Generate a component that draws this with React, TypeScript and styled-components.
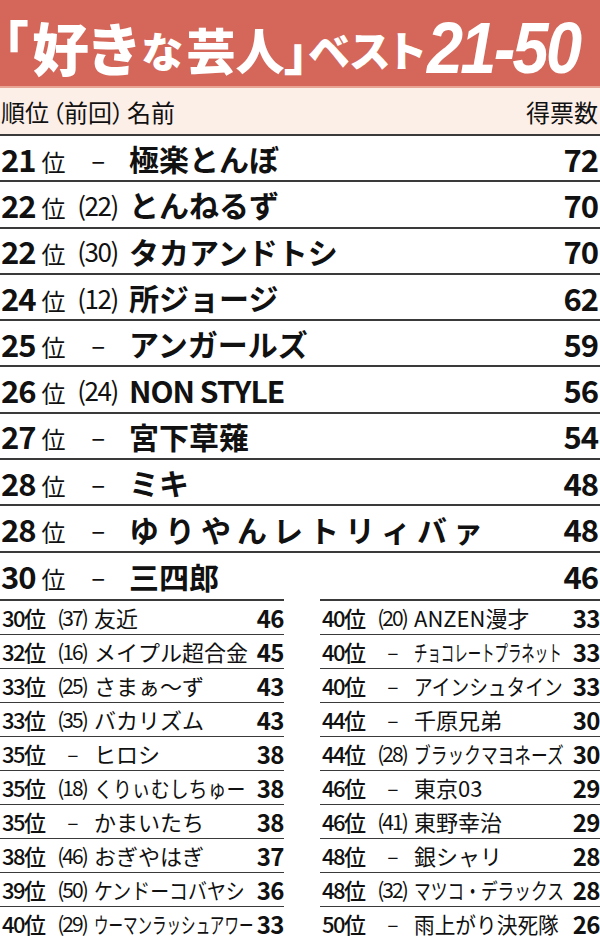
import styled, { createGlobalStyle } from "styled-components";

const GlobalStyle = createGlobalStyle`
  html, body {
    margin: 0;
    padding: 0;
    background: #ffffff;
  }
  body {
    font-family: "Noto Sans CJK JP", "Noto Sans", sans-serif;
    color: #111111;
  }
`;

const Page = styled.div`
  width: 600px;
  height: 940px;
  overflow: hidden;
  background: #ffffff;
`;

const TitleBar = styled.div`
  height: 86px;
  background: #d4675a;
  border-bottom: 2px solid #e8a596;
  display: flex;
  align-items: center;
  padding-left: 3px;
  color: #ffffff;
  font-weight: 900;
  white-space: nowrap;
  line-height: 1;
  font-feature-settings: "palt";
  overflow: hidden;
`;

const TitlePart = styled.span<{ $size: number; $shift?: number; $gap?: number }>`
  font-size: ${(p) => p.$size}px;
  position: relative;
  top: ${(p) => p.$shift ?? 0}px;
  margin-right: ${(p) => p.$gap ?? 0}px;
`;

const TitleNum = styled.span`
  display: inline-block;
  font-family: "Liberation Sans", sans-serif;
  font-style: italic;
  font-weight: 700;
  font-size: 72px;
  transform: scaleX(0.9);
  transform-origin: left center;
  letter-spacing: -3px;
  position: relative;
  top: 5px;
  margin-left: 2px;
`;

const HeaderRow = styled.div`
  height: 46px;
  background: #fcefe8;
  border-bottom: 2px solid #3a3a3a;
  display: flex;
  align-items: center;
  justify-content: space-between;
  font-size: 24px;
  padding: 0 2px 0 1px;
  font-feature-settings: "palt";
`;

const HeaderParen = styled.span`
  margin: 0 3px;
`;

const BigRow = styled.div<{ $last?: boolean }>`
  height: 46.3px;
  box-sizing: border-box;
  border-bottom: ${(p) => (p.$last ? "none" : "2px solid #3a3a3a")};
  display: flex;
  align-items: center;
  padding: 0 2px 0 1px;
  white-space: nowrap;
`;

const BigRank = styled.span`
  width: 70px;
  flex: none;
  display: flex;
  align-items: baseline;
`;

const BigRankNum = styled.span`
  font-size: 31px;
  font-weight: 700;
  letter-spacing: -1px;
`;

const BigRankUnit = styled.span`
  font-size: 24px;
  margin-left: 6px;
`;

const BigPrev = styled.span`
  width: 57px;
  flex: none;
  text-align: center;
  font-size: 26px;
  letter-spacing: -1.5px;
  margin-left: -2px;
`;

const BigName = styled.span<{ $spacing?: number }>`
  flex: 1;
  font-size: 30px;
  font-weight: 700;
  letter-spacing: ${(p) => p.$spacing ?? 0}px;
  margin-left: 3px;
`;

const BigVotes = styled.span`
  font-size: 31px;
  font-weight: 700;
  letter-spacing: -1px;
`;

const SmallGrid = styled.div`
  display: grid;
  grid-template-columns: 284px minmax(0, 1fr);
  column-gap: 36px;
`;

const SmallColumn = styled.div`
  border-top: 2px solid #3a3a3a;
  min-width: 0;
`;

const SmallRow = styled.div`
  height: 34px;
  box-sizing: border-box;
  border-bottom: 1.5px solid #3a3a3a;
  display: flex;
  align-items: center;
  white-space: nowrap;
  padding-left: 2px;
`;

const SmallRank = styled.span`
  width: 50px;
  flex: none;
  font-size: 22px;
  font-weight: 500;
  letter-spacing: -1.5px;
`;

const SmallPrev = styled.span`
  width: 40px;
  flex: none;
  text-align: center;
  font-size: 21px;
  letter-spacing: -2px;
`;

const SmallNameBox = styled.span`
  flex: 1;
  min-width: 0;
  margin-left: 2px;
`;

const SmallName = styled.span<{ $squeeze?: number }>`
  display: inline-block;
  font-size: 22px;
  transform: scaleX(${(p) => p.$squeeze ?? 1});
  transform-origin: left center;
`;

const SmallVotes = styled.span`
  flex: none;
  font-size: 24px;
  font-weight: 700;
  letter-spacing: -0.5px;
`;

type Entry = {
  rank: number;
  prev: string;
  name: string;
  votes: number;
  squeeze?: number;
  spacing?: number;
};

const bigEntries: Entry[] = [
  { rank: 21, prev: "–", name: "極楽とんぼ", votes: 72 },
  { rank: 22, prev: "(22)", name: "とんねるず", votes: 70 },
  { rank: 22, prev: "(30)", name: "タカアンドトシ", votes: 70 },
  { rank: 24, prev: "(12)", name: "所ジョージ", votes: 62 },
  { rank: 25, prev: "–", name: "アンガールズ", votes: 59 },
  { rank: 26, prev: "(24)", name: "NON STYLE", votes: 56, spacing: -1 },
  { rank: 27, prev: "–", name: "宮下草薙", votes: 54 },
  { rank: 28, prev: "–", name: "ミキ", votes: 48 },
  { rank: 28, prev: "–", name: "ゆりやんレトリィバァ", votes: 48, spacing: 6 },
  { rank: 30, prev: "–", name: "三四郎", votes: 46 },
];

const leftEntries: Entry[] = [
  { rank: 30, prev: "(37)", name: "友近", votes: 46 },
  { rank: 32, prev: "(16)", name: "メイプル超合金", votes: 45 },
  { rank: 33, prev: "(25)", name: "さまぁ～ず", votes: 43 },
  { rank: 33, prev: "(35)", name: "バカリズム", votes: 43 },
  { rank: 35, prev: "–", name: "ヒロシ", votes: 38 },
  { rank: 35, prev: "(18)", name: "くりぃむしちゅー", votes: 38, squeeze: 0.86 },
  { rank: 35, prev: "–", name: "かまいたち", votes: 38 },
  { rank: 38, prev: "(46)", name: "おぎやはぎ", votes: 37 },
  { rank: 39, prev: "(50)", name: "ケンドーコバヤシ", votes: 36, squeeze: 0.86 },
  { rank: 40, prev: "(29)", name: "ウーマンラッシュアワー", votes: 33, squeeze: 0.66 },
];

const rightEntries: Entry[] = [
  { rank: 40, prev: "(20)", name: "ANZEN漫才", votes: 33 },
  { rank: 40, prev: "–", name: "チョコレートプラネット", votes: 33, squeeze: 0.61 },
  { rank: 40, prev: "–", name: "アインシュタイン", votes: 33, squeeze: 0.85 },
  { rank: 44, prev: "–", name: "千原兄弟", votes: 30 },
  { rank: 44, prev: "(28)", name: "ブラックマヨネーズ", votes: 30, squeeze: 0.76 },
  { rank: 46, prev: "–", name: "東京03", votes: 29 },
  { rank: 46, prev: "(41)", name: "東野幸治", votes: 29 },
  { rank: 48, prev: "–", name: "銀シャリ", votes: 28 },
  { rank: 48, prev: "(32)", name: "マツコ・デラックス", votes: 28, squeeze: 0.76 },
  { rank: 50, prev: "–", name: "雨上がり決死隊", votes: 26, squeeze: 0.94 },
];

function SmallList({ entries }: { entries: Entry[] }) {
  return (
    <SmallColumn>
      {entries.map((e, i) => (
        <SmallRow key={i}>
          <SmallRank>{e.rank}位</SmallRank>
          <SmallPrev>{e.prev}</SmallPrev>
          <SmallNameBox>
            <SmallName $squeeze={e.squeeze}>{e.name}</SmallName>
          </SmallNameBox>
          <SmallVotes>{e.votes}</SmallVotes>
        </SmallRow>
      ))}
    </SmallColumn>
  );
}

export default function App() {
  return (
    <Page>
      <GlobalStyle />
      <TitleBar>
        <TitlePart $size={50} $shift={-2} $gap={4}>「</TitlePart>
        <TitlePart $size={57} $shift={3} $gap={3}>好き</TitlePart>
        <TitlePart $size={42} $shift={7} $gap={4}>な</TitlePart>
        <TitlePart $size={49} $shift={5}>芸人</TitlePart>
        <TitlePart $size={48} $shift={6}>」</TitlePart>
        <TitlePart $size={42} $shift={6}>ベスト</TitlePart>
        <TitleNum>21-50</TitleNum>
      </TitleBar>
      <HeaderRow>
        <span>
          順位<HeaderParen>（前回）</HeaderParen>名前
        </span>
        <span>得票数</span>
      </HeaderRow>
      {bigEntries.map((e, i) => (
        <BigRow key={i} $last={i === bigEntries.length - 1}>
          <BigRank>
            <BigRankNum>{e.rank}</BigRankNum>
            <BigRankUnit>位</BigRankUnit>
          </BigRank>
          <BigPrev>{e.prev}</BigPrev>
          <BigName $spacing={e.spacing}>{e.name}</BigName>
          <BigVotes>{e.votes}</BigVotes>
        </BigRow>
      ))}
      <SmallGrid>
        <SmallList entries={leftEntries} />
        <SmallList entries={rightEntries} />
      </SmallGrid>
    </Page>
  );
}
